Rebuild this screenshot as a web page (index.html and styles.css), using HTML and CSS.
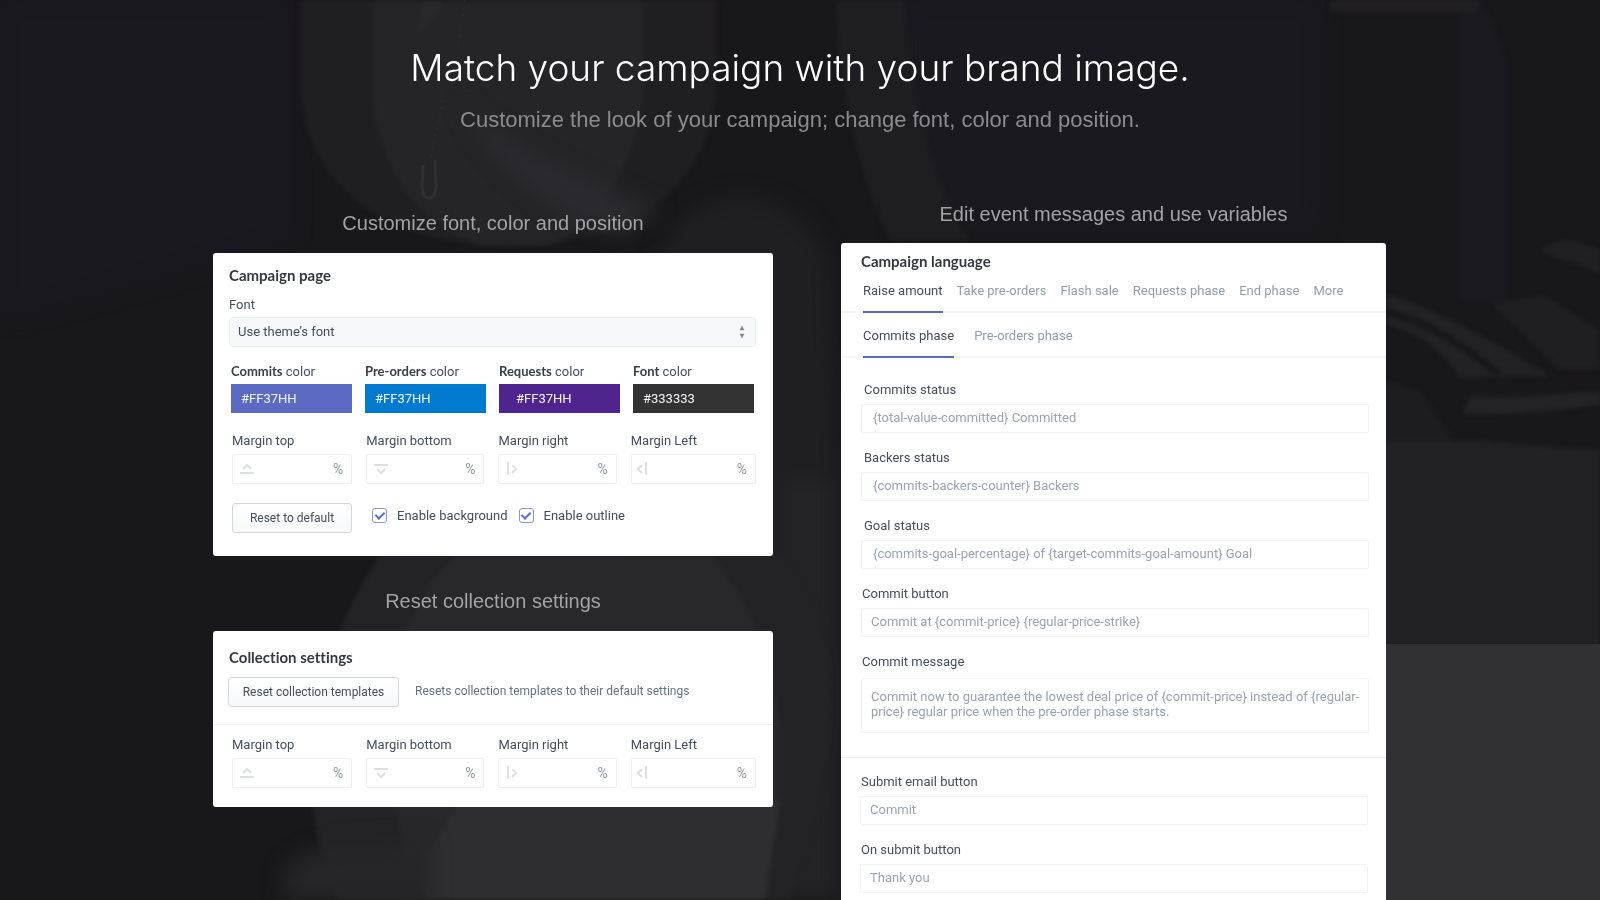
FILE: index.html
```
<!DOCTYPE html>
<html lang="en">
<head>
<meta charset="utf-8">
<meta name="viewport" content="width=device-width, initial-scale=1">
<title>Match your campaign with your brand image</title>
<link rel="stylesheet" href="styles.css">
</head>
<body>

<!-- Blurred backdrop -->
<svg class="backdrop" viewBox="0 0 1600 900" preserveAspectRatio="xMidYMid slice" aria-hidden="true">
  <defs>
    <filter id="soft" color-interpolation-filters="sRGB"><feGaussianBlur stdDeviation="2"/></filter>
    <filter id="haze" color-interpolation-filters="sRGB"><feGaussianBlur stdDeviation="10"/></filter>
  </defs>
  <rect width="1600" height="900" fill="#18171c"/>
  <g filter="url(#haze)">
    <path d="M0 0 H290 V240 L0 320 Z" fill="#1a1920"/>
    <path d="M660 260 C680 180 790 170 830 260 L840 480 L800 720 H640 Z" fill="#1f1e23"/>
    <rect x="900" y="0" width="420" height="230" fill="#1a1920"/>
    <rect x="780" y="480" width="60" height="420" fill="#232227"/>
  </g>
  <g filter="url(#soft)">
    <path d="M300 0 H717 V90 C710 180 640 246 508 246 C380 246 305 180 300 90 Z" fill="#1f1e22"/>
    <path d="M373 0 H643 V90 C640 160 600 225 550 245 H480 C415 225 375 160 373 90 Z" fill="#252429"/>
    <path d="M470 0 H442 C440 22 424 20 416 40 L424 0 Z" fill="#28272c"/>
    <path d="M835 0 H905 C910 90 930 180 970 240 H890 C855 170 840 90 835 0 Z" fill="#1e1d21"/>
    <path d="M380 555 H780 C820 590 835 650 830 720 C825 800 810 850 790 900 H339 C300 820 290 690 380 555 Z" fill="#232227"/>
    <path d="M455 555 H710 C770 620 810 760 753 900 H428 C380 810 360 650 455 555 Z" fill="#28272c"/>
    <path d="M460 800 H780 L765 900 H428 L400 850 H430 Z" fill="#2e2d32"/>
    <path d="M1330 0 H1480 V13 H1330 Z" fill="#1f1e23"/>
    <path d="M1460 12 H1488 L1507 60 V300 H1460 Z" fill="#1b1a21"/>
    <path d="M1380 380 L1420 390 L1460 450 H1380 Z" fill="#1d1c20"/>
    <path d="M1490 302 L1545 296 L1600 330 V370 H1560 Z" fill="#1f1e22"/>
    <path d="M1386 294 C1440 310 1500 345 1550 376 L1460 378 C1440 345 1410 330 1386 325 Z" fill="#222126"/>
    <path d="M1386 312 C1430 322 1460 345 1500 374" fill="none" stroke="#17161b" stroke-width="7"/>
    <path d="M1540 250 C1560 235 1580 242 1600 250 V274 C1580 262 1560 262 1540 250 Z" fill="#202024"/>
    <path d="M1470 396 C1520 400 1560 392 1600 392 V404 C1560 412 1510 414 1462 414 Z" fill="#242328"/>
    <path d="M1380 441 H1480 L1600 450 V645 H1380 Z" fill="#222126"/>
  </g>
  <g filter="url(#haze)">
    <path d="M460 100 C490 160 540 210 620 235 L660 210 C590 180 520 160 460 100 Z" fill="#2b2a30"/>
    <path d="M285 870 C300 850 330 840 430 840 V900 H285 Z" fill="#26252a"/>
  </g>
  <path d="M423 165 L422 188 C423 202 435 202 436 188 L435 160" fill="none" stroke="#302f34" stroke-width="3"/>
  <path d="M465 0 L458 48 M443 100 L430 160" fill="none" stroke="#2b2a2f" stroke-width="2" stroke-dasharray="2 5"/>
  <rect x="1380" y="644" width="220" height="256" fill="#313035"/>
</svg>

<main class="page">
  <header class="intro">
    <h1>Match your campaign with your brand image.</h1>
    <p>Customize the look of your campaign; change font, color and position.</p>
  </header>

  <div class="columns">
    <div class="left">
      <h2 class="caption">Customize font, color and position</h2>
      <section class="card campaign">
        <h3>Campaign page</h3>
        <label class="font-label" for="font">Font</label>
        <div class="select">
          <select id="font">
            <option>Use theme’s font</option>
          </select>
          <svg width="6" height="12" viewBox="0 0 6 12"><path d="M1 4 L3 0 L5 4 Z M1 8 L3 12 L5 8 Z" fill="#7c8a96" stroke="#7c8a96" stroke-width="0.5"/></svg>
        </div>

        <div class="colors">
          <div>
            <label for="c1"><b>Commits</b> color</label>
            <input class="swatch indigo" id="c1" type="text" value="#FF37HH">
          </div>
          <div>
            <label for="c2"><b>Pre-orders</b> color</label>
            <input class="swatch blue" id="c2" type="text" value="#FF37HH">
          </div>
          <div>
            <label for="c3"><b>Requests</b> color</label>
            <input class="swatch purple" id="c3" type="text" value="#FF37HH">
          </div>
          <div>
            <label for="c4"><b>Font</b> color</label>
            <input class="swatch dark" id="c4" type="text" value="#333333">
          </div>
        </div>

        <div class="margins">
          <div>
            <label for="m1">Margin top</label>
            <div class="unit">
              <svg width="14" height="14" viewBox="0 0 14 14"><path d="M3 7 L7 3 L11 7 M0 11 H14"/></svg>
              <input id="m1" type="text"><span>%</span>
            </div>
          </div>
          <div>
            <label for="m2">Margin bottom</label>
            <div class="unit">
              <svg width="14" height="14" viewBox="0 0 14 14"><path d="M0 3 H14 M3 7 L7 11 L11 7"/></svg>
              <input id="m2" type="text"><span>%</span>
            </div>
          </div>
          <div>
            <label for="m3">Margin right</label>
            <div class="unit">
              <svg width="14" height="14" viewBox="0 0 14 14"><path d="M2 0 V13 M6 3 L10 7 L6 11"/></svg>
              <input id="m3" type="text"><span>%</span>
            </div>
          </div>
          <div>
            <label for="m4">Margin Left</label>
            <div class="unit">
              <svg width="14" height="14" viewBox="0 0 14 14"><path d="M3 3 L-1 7 L3 11 M7 0 V13"/></svg>
              <input id="m4" type="text"><span>%</span>
            </div>
          </div>
        </div>

        <div class="actions">
          <button class="btn" type="button">Reset to default</button>
          <label class="check"><input type="checkbox" checked>Enable background</label>
          <label class="check"><input type="checkbox" checked>Enable outline</label>
        </div>
      </section>

      <h2 class="caption second">Reset collection settings</h2>
      <section class="card collection">
        <h3>Collection settings</h3>
        <div class="reset">
          <button class="btn" type="button">Reset collection templates</button>
          <p>Resets collection templates to their default settings</p>
        </div>
        <div class="margins">
          <div>
            <label for="n1">Margin top</label>
            <div class="unit">
              <svg width="14" height="14" viewBox="0 0 14 14"><path d="M3 7 L7 3 L11 7 M0 11 H14"/></svg>
              <input id="n1" type="text"><span>%</span>
            </div>
          </div>
          <div>
            <label for="n2">Margin bottom</label>
            <div class="unit">
              <svg width="14" height="14" viewBox="0 0 14 14"><path d="M0 3 H14 M3 7 L7 11 L11 7"/></svg>
              <input id="n2" type="text"><span>%</span>
            </div>
          </div>
          <div>
            <label for="n3">Margin right</label>
            <div class="unit">
              <svg width="14" height="14" viewBox="0 0 14 14"><path d="M2 0 V13 M6 3 L10 7 L6 11"/></svg>
              <input id="n3" type="text"><span>%</span>
            </div>
          </div>
          <div>
            <label for="n4">Margin Left</label>
            <div class="unit">
              <svg width="14" height="14" viewBox="0 0 14 14"><path d="M3 3 L-1 7 L3 11 M7 0 V13"/></svg>
              <input id="n4" type="text"><span>%</span>
            </div>
          </div>
        </div>
      </section>
    </div>

    <div class="right">
      <h2 class="caption">Edit event messages and use variables</h2>
      <section class="card language">
        <h3>Campaign language</h3>
        <nav class="tabs">
          <a class="active" href="#">Raise amount</a>
          <a href="#">Take pre-orders</a>
          <a href="#">Flash sale</a>
          <a href="#">Requests phase</a>
          <a href="#">End phase</a>
          <a href="#">More</a>
        </nav>
        <nav class="tabs sub">
          <a class="active" href="#">Commits phase</a>
          <a href="#">Pre-orders phase</a>
        </nav>
        <div class="fields">
          <div class="field">
            <label for="f1">Commits status</label>
            <input id="f1" type="text" value="{total-value-committed} Committed">
          </div>
          <div class="field">
            <label for="f2">Backers status</label>
            <input id="f2" type="text" value="{commits-backers-counter} Backers">
          </div>
          <div class="field">
            <label for="f3">Goal status</label>
            <input id="f3" type="text" value="{commits-goal-percentage} of {target-commits-goal-amount} Goal">
          </div>
          <div class="field tight">
            <label for="f4">Commit button</label>
            <input id="f4" type="text" value="Commit at {commit-price} {regular-price-strike}">
          </div>
          <div class="field tight">
            <label for="f5">Commit message</label>
            <textarea id="f5">Commit now to guarantee the lowest deal price of {commit-price} instead of {regular-price} regular price when the pre-order phase starts.</textarea>
          </div>
        </div>
        <div class="fields submit">
          <div class="field tight">
            <label for="f6">Submit email button</label>
            <input id="f6" type="text" value="Commit">
          </div>
          <div class="field tight">
            <label for="f7">On submit button</label>
            <input id="f7" type="text" value="Thank you">
          </div>
        </div>
      </section>
    </div>
  </div>
</main>

</body>
</html>
```

FILE: styles.css
```
* {box-sizing: border-box}
body {
  margin: 0;
  height: 100vh;
  overflow: hidden;
  background: #18171c;
  color: #454f5b;
  font: 13px/18px Roboto, sans-serif;
}
h1, h2, h3, p {
  margin: 0;
  font-weight: normal;
}
input, select, textarea, button {
  font: inherit;
  color: inherit;
  outline: none;
}
.backdrop {
  position: fixed;
  top: 0;
  left: 0;
  width: 100%;
  height: 100%;
  z-index: -1;
}

/* Heading */
.intro {
  padding-top: 44px;
  text-align: center;
  font-family: "Liberation Sans", Arial, sans-serif;
}
.intro h1 {
  color: #fff;
  font: 300 37px/48px Inter, sans-serif;
}
.intro p {
  margin-top: 14px;
  color: #8b8a8f;
  font-size: 22px;
  line-height: 28px;
}
.columns {
  display: flex;
  align-items: flex-start;
  gap: 68px;
  width: 74%;
  max-width: 1174px;
  margin: 66px auto 0;
}
.left {
  width: 560px;
  padding-top: 9px;
}
.right {
  width: 545px;
}
.caption {
  margin-bottom: 15px;
  color: #a3a2a6;
  text-align: center;
  font: 20px/28px "Liberation Sans", Arial, sans-serif;
}
.left .caption {
  margin-bottom: 16px;
}
.caption.second {
  margin-top: 31px;
}
.card {
  background: #fff;
  border-radius: 3px;
}
.card h3 {
  color: #33393f;
  font: 700 15px/20px Lato, sans-serif;
  font-variant-ligatures: none;
}

/* Campaign page */
.campaign {
  padding: 12px 17px 23px 16px;
}
.font-label {
  display: block;
  margin: 11px 0 3px;
}
.select {
  position: relative;
}
.select select {
  width: 100%;
  height: 30px;
  padding: 0 8px 1px;
  appearance: none;
  background: #f6f8fa;
  border: 1px solid #ebeef0;
  border-radius: 4px;
}
.select svg {
  position: absolute;
  right: 11px;
  top: 9px;
}
.colors {
  display: grid;
  grid-template-columns: repeat(4, 1fr);
  gap: 13px;
  padding: 0 2px;
  margin-top: 14px;
}
.colors label, .margins label {
  display: block;
  line-height: 20px;
}
.colors b {
  color: #36424a;
  font: 700 13px/20px Lato, sans-serif;
}
.swatch {
  display: block;
  width: 100%;
  height: 29px;
  margin-top: 2px;
  padding: 0 10px;
  border: 0;
  color: #f4f5fa;
}
.indigo {
  background: #5c6ac4;
}
.blue {
  background: #007ace;
}
.purple {
  padding-left: 17px;
  background: #50248f;
}
.dark {
  background: #333;
}
.margins {
  display: grid;
  grid-template-columns: minmax(0, 120fr) minmax(0, 118fr) minmax(0, 118fr) minmax(0, 125fr);
  gap: 14px;
  padding-left: 3px;
  margin-top: 18px;
}
.unit {
  display: flex;
  align-items: center;
  height: 30px;
  margin-top: 3px;
  padding: 0 8px 0 7px;
  border: 1px solid #eceef0;
  border-radius: 2px;
}
.unit input {
  flex: 1;
  min-width: 0;
  border: 0;
  background: none;
}
.unit span {
  color: #919aa3;
  font-size: 14px;
}
.unit svg {
  flex: none;
  overflow: visible;
  fill: none;
  stroke: #dcdfe4;
  stroke-width: 2;
}
.btn {
  height: 30px;
  border: 1px solid #d3d8dd;
  border-radius: 3px;
  background: linear-gradient(#fff, #f7f8f9);
  font-size: 12px;
  cursor: pointer;
}
.actions {
  display: flex;
  align-items: center;
  padding-left: 3px;
  margin-top: 19px;
}
.actions .btn {
  width: 120px;
  margin-right: 9px;
}
.check {
  display: flex;
  align-items: center;
  gap: 10px;
  margin: 0 0 5px 11px;
}
.check input {
  appearance: none;
  width: 15px;
  height: 15px;
  margin: 0;
  border: 1px solid #8a93dc;
  border-radius: 3px;
}
.check input::before {
  content: "";
  display: block;
  width: 4px;
  height: 7px;
  margin: 1px auto 0;
  border: solid #5c6ac4;
  border-width: 0 2px 2px 0;
  transform: rotate(45deg);
}

/* Collection settings */
.collection {
  padding: 16px 0 19px;
}
.collection h3 {
  padding-left: 16px;
}
.reset {
  display: flex;
  padding: 10px 15px 17px;
  border-bottom: 1px solid #eff1f3;
}
.reset .btn {
  width: 171px;
  margin-right: 16px;
}
.reset p {
  padding-top: 5px;
  color: #637381;
  font-size: 12px;
}
.collection .margins {
  margin-top: 10px;
  padding: 0 17px 0 19px;
}

/* Campaign language */
.language {
  padding-top: 8px;
}
.language h3 {
  padding-left: 20px;
}
.tabs {
  display: flex;
  gap: 14px;
  padding: 11px 22px 0;
  border-bottom: 2px solid #f3f5f7;
}
.tabs a {
  margin-bottom: -2px;
  padding-bottom: 11px;
  border-bottom: 2px solid transparent;
  color: #919eab;
  text-decoration: none;
}
.tabs .active {
  color: #454f5b;
  border-color: #5c6ac4;
}
.sub {
  gap: 20px;
  padding-top: 14px;
}
.fields {
  padding: 23px 17px 24px 20px;
}
.field {
  margin-bottom: 16px;
}
.field label {
  display: block;
  padding: 0 3px 5px;
}
.field input, .field textarea {
  display: block;
  width: 100%;
  height: 29px;
  padding: 0 11px 2px;
  border: 1px solid #f0f2f4;
  border-radius: 2px;
  color: #9aa4b0;
}
.field textarea {
  height: 55px;
  margin-top: 2px;
  padding: 10px 2px 10px 9px;
  line-height: 15px;
  resize: none;
}
.tight label {
  padding-left: 1px;
}
.tight input {
  padding-left: 9px;
}
.submit {
  padding: 15px 18px 20px 19px;
  border-top: 1px solid #eff1f3;
}
.fields .field:last-child {
  margin-bottom: 0;
}
```
